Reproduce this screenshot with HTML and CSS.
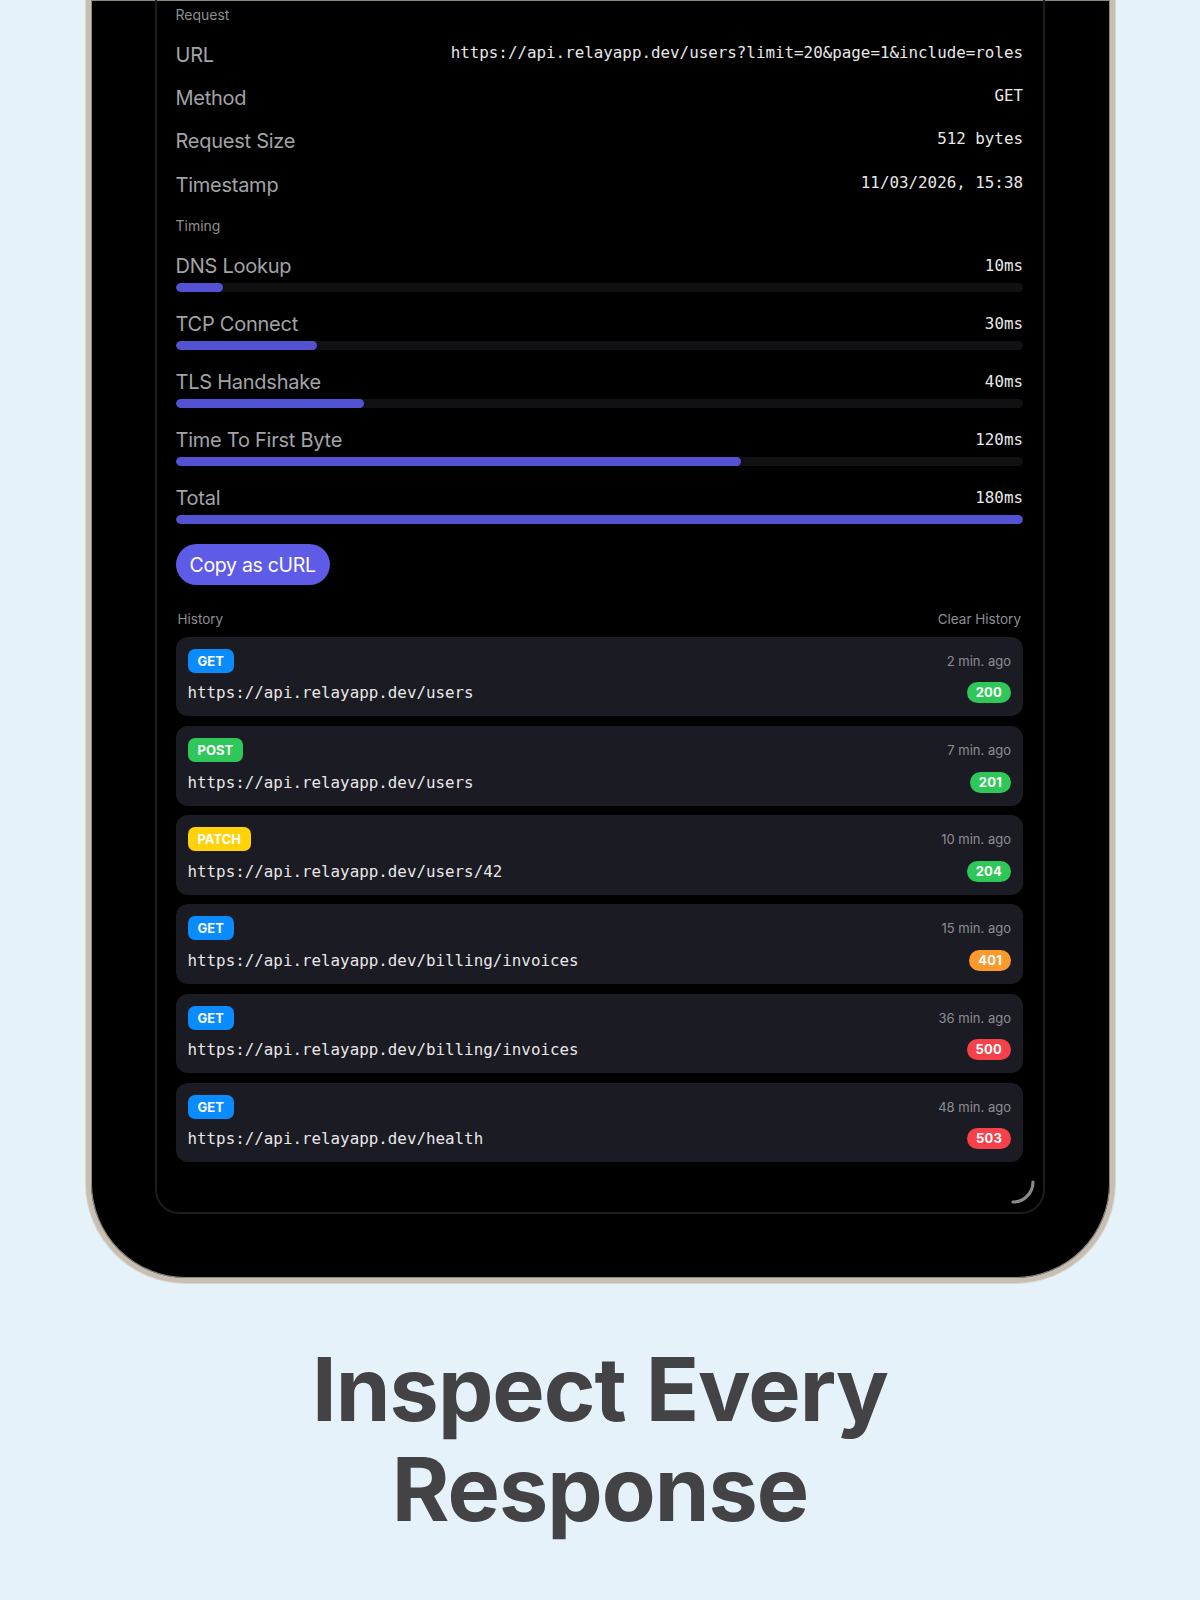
FILE: index.html
```html
<!DOCTYPE html>
<html lang="en">
<head>
<meta charset="utf-8">
<title>Inspect Every Response</title>
<link rel="stylesheet" href="styles.css">
</head>
<body>
<div class="device">
  <div class="panel">
    <div class="section-label first">Request</div>
    <div class="kv"><span class="k">URL</span><span class="v">https://api.relayapp.dev/users?limit=20&amp;page=1&amp;include=roles</span></div>
    <div class="kv"><span class="k">Method</span><span class="v">GET</span></div>
    <div class="kv"><span class="k">Request Size</span><span class="v">512 bytes</span></div>
    <div class="kv"><span class="k">Timestamp</span><span class="v">11/03/2026, 15:38</span></div>

    <div class="section-label timing-label">Timing</div>
    <div class="timing">
      <div class="t-head"><span class="k">DNS Lookup</span><span class="v">10ms</span></div>
      <div class="track"><div class="fill" style="width:5.56%"></div></div>
    </div>
    <div class="timing">
      <div class="t-head"><span class="k">TCP Connect</span><span class="v">30ms</span></div>
      <div class="track"><div class="fill" style="width:16.67%"></div></div>
    </div>
    <div class="timing">
      <div class="t-head"><span class="k">TLS Handshake</span><span class="v">40ms</span></div>
      <div class="track"><div class="fill" style="width:22.22%"></div></div>
    </div>
    <div class="timing">
      <div class="t-head"><span class="k">Time To First Byte</span><span class="v">120ms</span></div>
      <div class="track"><div class="fill" style="width:66.67%"></div></div>
    </div>
    <div class="timing">
      <div class="t-head"><span class="k">Total</span><span class="v">180ms</span></div>
      <div class="track"><div class="fill" style="width:100%"></div></div>
    </div>

    <button class="copy-btn">Copy as cURL</button>

    <div class="history-head"><span>History</span><span>Clear History</span></div>
    <div class="history">
      <div class="card">
        <span class="method get">GET</span><span class="ago">2 min. ago</span>
        <span class="url">https://api.relayapp.dev/users</span><span class="status ok">200</span>
      </div>
      <div class="card">
        <span class="method post">POST</span><span class="ago">7 min. ago</span>
        <span class="url">https://api.relayapp.dev/users</span><span class="status ok">201</span>
      </div>
      <div class="card">
        <span class="method patch">PATCH</span><span class="ago">10 min. ago</span>
        <span class="url">https://api.relayapp.dev/users/42</span><span class="status ok">204</span>
      </div>
      <div class="card">
        <span class="method get">GET</span><span class="ago">15 min. ago</span>
        <span class="url">https://api.relayapp.dev/billing/invoices</span><span class="status warn">401</span>
      </div>
      <div class="card">
        <span class="method get">GET</span><span class="ago">36 min. ago</span>
        <span class="url">https://api.relayapp.dev/billing/invoices</span><span class="status err">500</span>
      </div>
      <div class="card">
        <span class="method get">GET</span><span class="ago">48 min. ago</span>
        <span class="url">https://api.relayapp.dev/health</span><span class="status err">503</span>
      </div>
    </div>
    <svg class="spinner" width="26" height="26" viewBox="0 0 26 26" aria-hidden="true">
      <path d="M22 2 A20 20 0 0 1 2 22" fill="none" stroke="#8a8a8e" stroke-width="3.2" stroke-linecap="round"/>
    </svg>
  </div>
</div>
<h1 class="headline">Inspect Every<br>Response</h1>
</body>
</html>
```
FILE: styles.css
```css
* { box-sizing: border-box; }

html, body {
  margin: 0;
  padding: 0;
}

body {
  background: #e6f2f9;
  font-family: Inter, "Noto Sans", "Liberation Sans", sans-serif;
  width: 1200px;
  height: 1600px;
  overflow: hidden;
}

.device {
  margin-left: 86px;
  width: 1029px;
  background: #000;
  border: 5px solid #c7bfb3;
  border-top: 0;
  border-radius: 0 0 100px 100px;
  padding: 0 65px 64px 64px;
  box-shadow: inset 0 0 0 1px #8f887e, 0 0 0 1px #ddd6cb;
}

.panel {
  position: relative;
  border: 2px solid #1c1c1f;
  border-top: 0;
  border-radius: 0 0 24px 24px;
  padding: 5px 20px 50px 18.5px;
}

.section-label {
  font-size: 14px;
  line-height: 20px;
  color: #8e8e93;
}

.section-label.first {
  margin-bottom: 8px;
}

.timing-label {
  margin-top: 10px;
  margin-bottom: 18px;
}

.kv {
  display: flex;
  justify-content: space-between;
  align-items: center;
  height: 43.33px;
  line-height: 24px;
}

.kv .v {
  margin-bottom: 4px;
}

.k {
  font-size: 20px;
  letter-spacing: -0.25px;
  color: #a3a3a8;
}

.v {
  font-family: "DejaVu Sans Mono", "Liberation Mono", monospace;
  font-size: 15.85px;
  color: #e8e8e8;
}

.timing {
  margin-bottom: 20px;
}

.t-head {
  display: flex;
  justify-content: space-between;
  align-items: center;
  line-height: 24px;
  height: 24px;
  margin-bottom: 5px;
}

.track {
  height: 9px;
  border-radius: 5px;
  background: #111114;
  overflow: hidden;
}

.fill {
  height: 100%;
  border-radius: 5px;
  background: #5352d2;
}

.copy-btn {
  display: block;
  margin-top: 0;
  height: 41px;
  padding: 0 14px;
  border: 0;
  border-radius: 21px;
  background: #5e5ce6;
  color: #fff;
  font-family: Inter, "Noto Sans", sans-serif;
  font-size: 19.5px;
  letter-spacing: -0.3px;
}

.history-head {
  display: flex;
  justify-content: space-between;
  margin-top: 24px;
  margin-bottom: 7.5px;
  padding: 0 2px;
  font-size: 13.5px;
  line-height: 20px;
  color: #8e8e93;
}

.history {
  display: flex;
  flex-direction: column;
  gap: 9.7px;
}

.card {
  display: grid;
  grid-template-columns: 1fr auto;
  grid-template-rows: 24px 21px;
  row-gap: 9.5px;
  align-items: center;
  padding: 12px 12px 13px 12px;
  background: #1b1b23;
  border-radius: 12px;
}

.method {
  justify-self: start;
  height: 24px;
  line-height: 24px;
  padding: 0 10px;
  border-radius: 7px;
  font-size: 13px;
  font-weight: 700;
  color: #fff;
}

.method.get { background: #0a8cff; }
.method.post { background: #30c75a; }
.method.patch { background: #ffd20a; }

.ago {
  font-size: 13px;
  color: #8e8e93;
  text-align: right;
}

.url {
  font-family: "DejaVu Sans Mono", "Liberation Mono", monospace;
  font-size: 15.85px;
  color: #e8e8e8;
}

.status {
  justify-self: end;
  height: 21px;
  line-height: 21px;
  padding: 0 9px;
  border-radius: 11px;
  font-size: 13px;
  font-weight: 700;
  letter-spacing: 0.2px;
  color: #fff;
}

.status.ok { background: #2fc858; }
.status.warn { background: #fd9a2e; }
.status.err { background: #f7414a; }

.spinner {
  position: absolute;
  right: 6px;
  bottom: 6px;
}

.headline {
  margin: 56px 0 0;
  text-align: center;
  font-size: 88px;
  line-height: 100px;
  font-weight: 700;
  color: #434345;
  letter-spacing: -1px;
}
```
